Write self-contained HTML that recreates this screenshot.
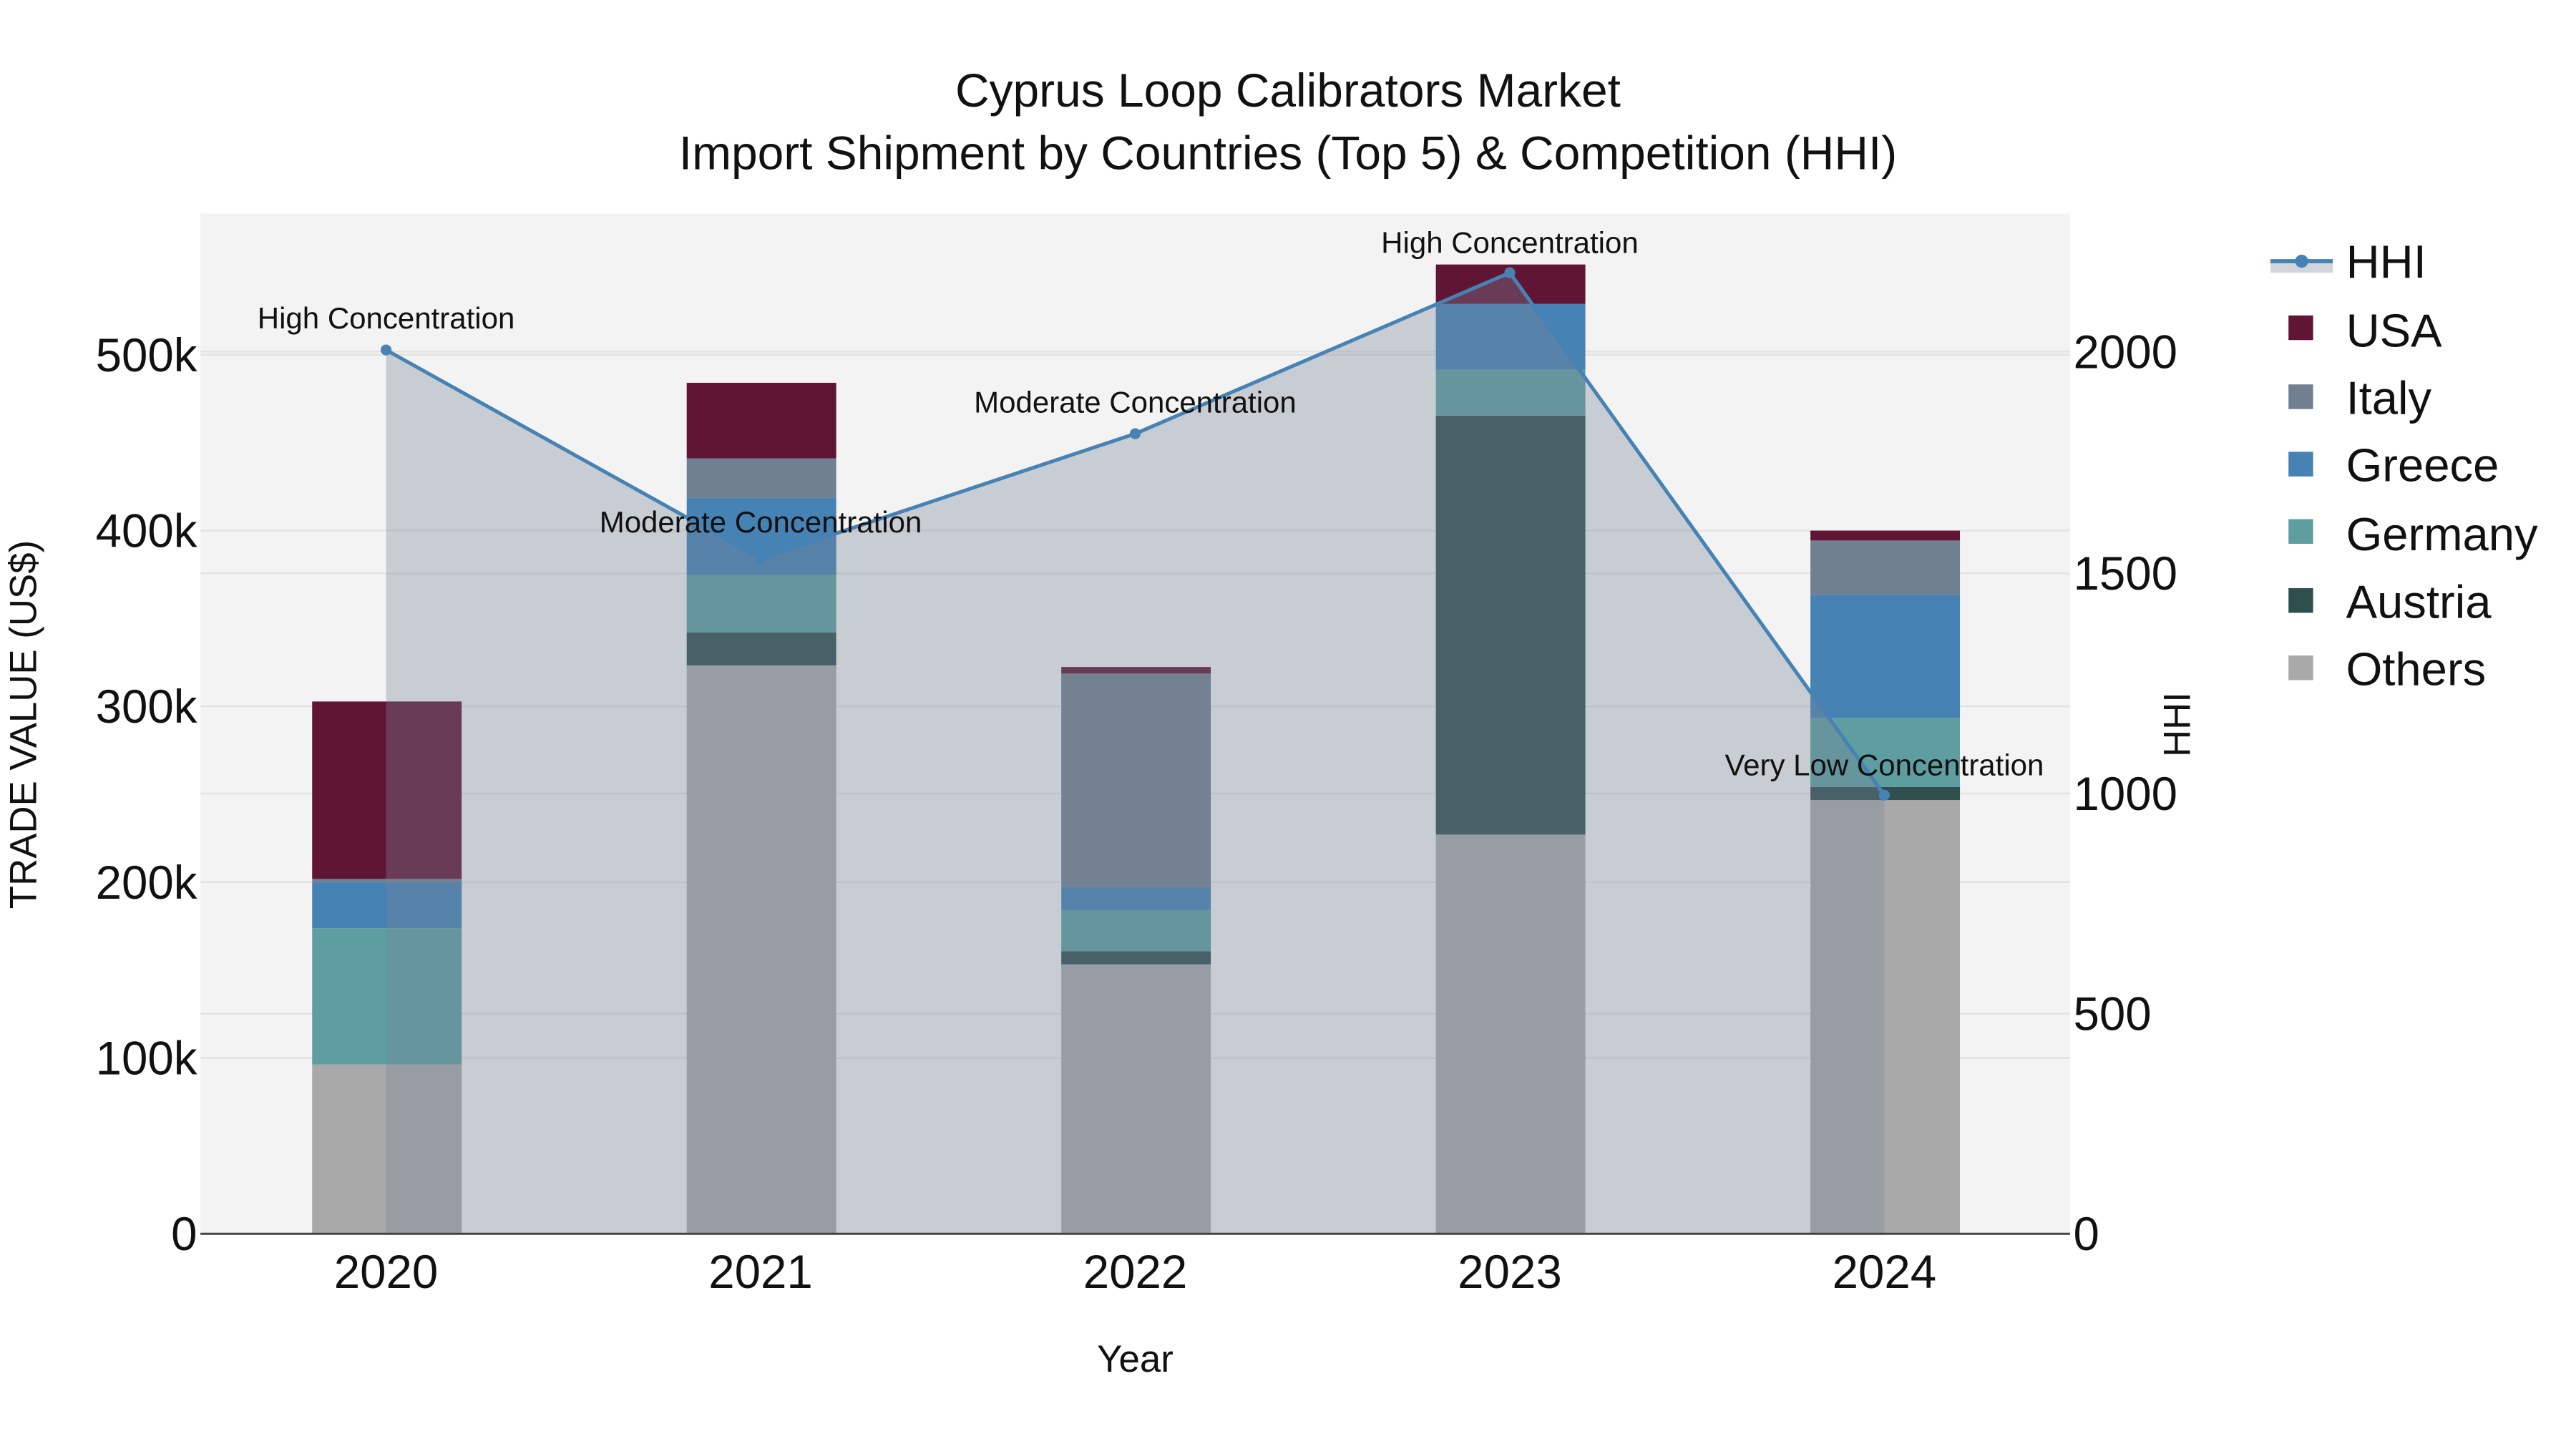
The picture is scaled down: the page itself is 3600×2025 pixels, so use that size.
<!DOCTYPE html>
<html><head><meta charset="utf-8"><style>
html,body{margin:0;padding:0;background:#fff}
svg{display:block}
text{font-family:"Liberation Sans",Arial,sans-serif;fill:#111}
</style></head><body>
<svg width="3600" height="2025" viewBox="0 0 1568 882" xmlns="http://www.w3.org/2000/svg">
<rect x="0" y="0" width="1568" height="882" fill="#fff"/>
<rect x="122" y="130" width="1138" height="621" fill="#f3f3f3"/>
<g stroke="#e2e2e2" stroke-width="1">
<line x1="122" x2="1260" y1="644" y2="644"/><line x1="122" x2="1260" y1="537" y2="537"/>
<line x1="122" x2="1260" y1="430" y2="430"/><line x1="122" x2="1260" y1="323" y2="323"/>
<line x1="122" x2="1260" y1="216" y2="216"/>
<line x1="122" x2="1260" y1="617" y2="617"/><line x1="122" x2="1260" y1="483" y2="483"/>
<line x1="122" x2="1260" y1="349" y2="349"/><line x1="122" x2="1260" y1="214" y2="214"/>
</g>
<g>
<rect x="190" y="648" width="91" height="103" fill="#a9a9a9"/>
<rect x="190" y="565" width="91" height="83" fill="#5f9ea0"/>
<rect x="190" y="537" width="91" height="28" fill="#4682b4"/>
<rect x="190" y="535" width="91" height="2" fill="#708090"/>
<rect x="190" y="427" width="91" height="108" fill="#611535"/>

<rect x="418" y="405" width="91" height="346" fill="#a9a9a9"/>
<rect x="418" y="385" width="91" height="20" fill="#2f4f4f"/>
<rect x="418" y="350" width="91" height="35" fill="#5f9ea0"/>
<rect x="418" y="303" width="91" height="47" fill="#4682b4"/>
<rect x="418" y="279" width="91" height="24" fill="#708090"/>
<rect x="418" y="233" width="91" height="46" fill="#611535"/>

<rect x="646" y="587" width="91" height="164" fill="#a9a9a9"/>
<rect x="646" y="579" width="91" height="8" fill="#2f4f4f"/>
<rect x="646" y="554" width="91" height="25" fill="#5f9ea0"/>
<rect x="646" y="540" width="91" height="14" fill="#4682b4"/>
<rect x="646" y="410" width="91" height="130" fill="#708090"/>
<rect x="646" y="406" width="91" height="4" fill="#611535"/>

<rect x="874" y="508" width="91" height="243" fill="#a9a9a9"/>
<rect x="874" y="253" width="91" height="255" fill="#2f4f4f"/>
<rect x="874" y="225" width="91" height="28" fill="#5f9ea0"/>
<rect x="874" y="185" width="91" height="40" fill="#4682b4"/>
<rect x="874" y="161" width="91" height="24" fill="#611535"/>

<rect x="1102" y="487" width="91" height="264" fill="#a9a9a9"/>
<rect x="1102" y="479" width="91" height="8" fill="#2f4f4f"/>
<rect x="1102" y="437" width="91" height="42" fill="#5f9ea0"/>
<rect x="1102" y="362" width="91" height="75" fill="#4682b4"/>
<rect x="1102" y="329" width="91" height="33" fill="#708090"/>
<rect x="1102" y="323" width="91" height="6" fill="#611535"/>
</g>
<path d="M235,751 L235,213 L463,340 L691,264 L919,166 L1147,484 L1147,751 Z" fill="rgb(120,131,151)" fill-opacity="0.35"/>
<polyline points="235,213 463,340 691,264 919,166 1147,484" fill="none" stroke="#4682b4" stroke-width="2.2"/>
<g fill="#4682b4"><circle cx="235" cy="213" r="3.3"/><circle cx="463" cy="340" r="3.3"/><circle cx="691" cy="264" r="3.3"/><circle cx="919" cy="166" r="3.3"/><circle cx="1147" cy="484" r="3.3"/></g>
<line x1="122" x2="1260" y1="751" y2="751" stroke="#444" stroke-width="1.3"/>
<g font-size="18.3" text-anchor="middle">
<text x="235" y="200">High Concentration</text>
<text x="463" y="324">Moderate Concentration</text>
<text x="691" y="251">Moderate Concentration</text>
<text x="919" y="154">High Concentration</text>
<text x="1147" y="472">Very Low Concentration</text>
</g>
<g font-size="28.7" text-anchor="middle">
<text x="784" y="65">Cyprus Loop Calibrators Market</text>
<text x="784" y="103">Import Shipment by Countries (Top 5) &amp; Competition (HHI)</text>
</g>
<g font-size="28.5" text-anchor="end">
<text x="120" y="761">0</text><text x="120" y="654">100k</text><text x="120" y="547">200k</text>
<text x="120" y="440">300k</text><text x="120" y="333">400k</text><text x="120" y="226">500k</text>
</g>
<g font-size="28.5" text-anchor="start">
<text x="1262" y="761">0</text><text x="1262" y="627">500</text><text x="1262" y="493">1000</text>
<text x="1262" y="359">1500</text><text x="1262" y="224">2000</text>
</g>
<g font-size="28.5" text-anchor="middle">
<text x="235" y="784">2020</text><text x="463" y="784">2021</text><text x="691" y="784">2022</text>
<text x="919" y="784">2023</text><text x="1147" y="784">2024</text>
</g>
<text x="691" y="835" font-size="23" text-anchor="middle">Year</text>
<text transform="translate(22,441) rotate(-90)" font-size="23" text-anchor="middle">TRADE VALUE (US$)</text>
<text transform="translate(1333,441) rotate(-90)" font-size="23" text-anchor="middle">HHI</text>
<rect x="1382" y="159" width="38" height="7" fill="#d2d6dc"/>
<line x1="1382" x2="1420" y1="159" y2="159" stroke="#4682b4" stroke-width="2.5"/>
<circle cx="1401" cy="159" r="4" fill="#4682b4"/>
<rect x="1393" y="192" width="15" height="15" fill="#611535"/>
<rect x="1393" y="234" width="15" height="15" fill="#708090"/>
<rect x="1393" y="275" width="15" height="15" fill="#4682b4"/>
<rect x="1393" y="316" width="15" height="15" fill="#5f9ea0"/>
<rect x="1393" y="358" width="15" height="15" fill="#2f4f4f"/>
<rect x="1393" y="399" width="15" height="15" fill="#a9a9a9"/>
<g font-size="28.4">
<text x="1428" y="169">HHI</text><text x="1428" y="211">USA</text><text x="1428" y="252">Italy</text>
<text x="1428" y="293">Greece</text><text x="1428" y="335">Germany</text><text x="1428" y="376">Austria</text>
<text x="1428" y="417">Others</text>
</g>
</svg>
</body></html>
